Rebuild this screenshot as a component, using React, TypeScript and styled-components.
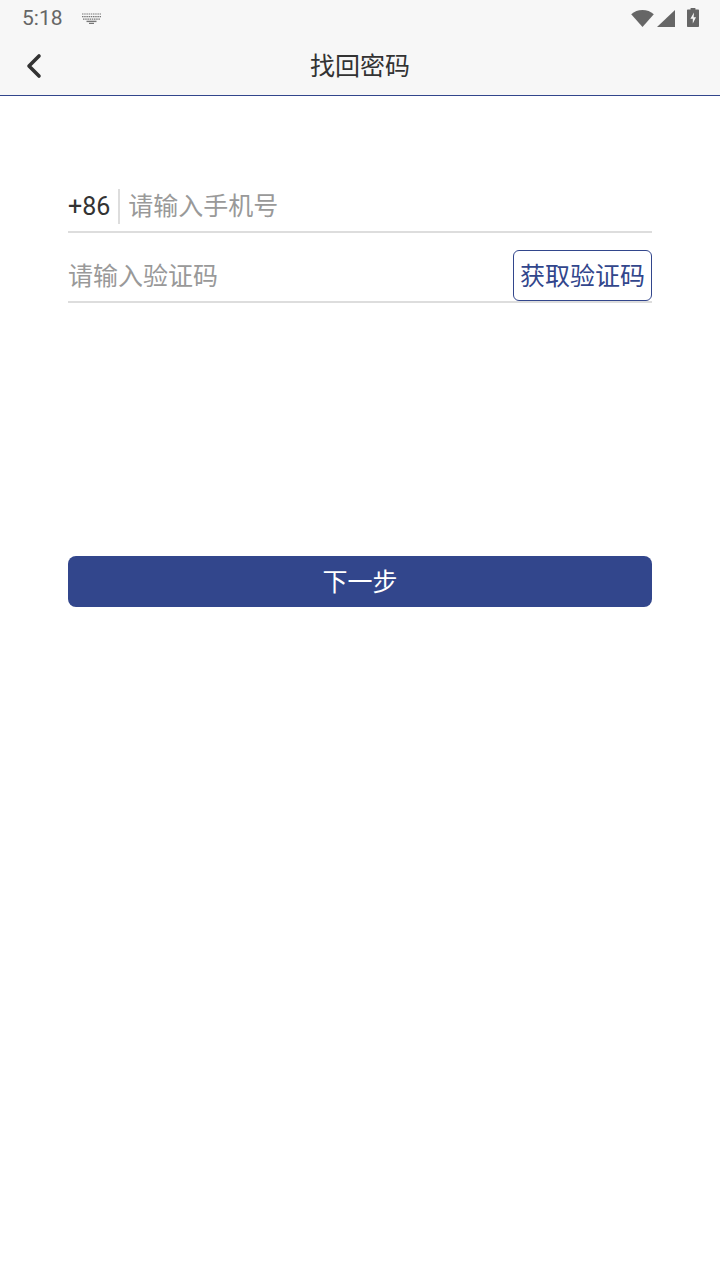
import React from 'react';
import styled, {createGlobalStyle} from 'styled-components';

const GlobalStyle = createGlobalStyle`
  html, body {
    margin: 0;
    padding: 0;
    background: #fff;
  }

  body {
    font-family: "Roboto", "Noto Sans CJK SC", sans-serif;
  }
`;

export default function App() {
    return (
        <Page>
            <GlobalStyle/>
            <Header>
                <StatusBar>
                    <StatusLeft>
                        <Time>5:18</Time>
                        <svg width="19" height="11" viewBox="0 0 19 11">
                            <g fill="none" stroke="#777" strokeWidth="1.2">
                                <path d="M0 1h19" strokeDasharray="1.5 .7"/>
                                <path d="M0 3.6h19" strokeDasharray="1.5 .7"/>
                                <path d="M1 6.2h17" strokeDasharray="1.5 .7"/>
                                <path d="M4.5 8.4h10" strokeWidth="1.4"/>
                                <path d="M7 10.4h5"/>
                            </g>
                        </svg>
                    </StatusLeft>
                    <StatusIcons>
                        <svg width="23" height="17" viewBox="0 0 23 17">
                            <path d="M0.2 4.2C3.2 1.6 7.2 0 11.5 0s8.3 1.6 11.3 4.2L11.5 17z" fill="#666"/>
                        </svg>
                        <svg width="18" height="17" viewBox="0 0 18 17">
                            <path d="M0 17L18 0v17z" fill="#666"/>
                        </svg>
                        <BatteryIcon width="12" height="19" viewBox="0 0 12 19">
                            <path fillRule="evenodd" d="M3.6 0h4.8v1.6h2.6c.6 0 1 .4 1 1V18c0 .6-.4 1-1 1H1c-.6 0-1-.4-1-1V2.6c0-.6.4-1 1-1h2.6zM7 4.6L3.4 10.8h2.4V15.6l3.2-6.4H6.6z" fill="#666"/>
                        </BatteryIcon>
                    </StatusIcons>
                </StatusBar>
                <NavBar>
                    <BackButton>
                        <svg width="18" height="28" viewBox="0 0 18 28">
                            <path d="M14 4L4 14l10 10" fill="none" stroke="#333" strokeWidth="3.6" strokeLinecap="round" strokeLinejoin="round"/>
                        </svg>
                    </BackButton>
                    <Title>找回密码</Title>
                </NavBar>
            </Header>
            <Form>
                <Row>
                    <Prefix>+86</Prefix>
                    <PrefixDivider/>
                    <Placeholder>请输入手机号</Placeholder>
                </Row>
                <Row>
                    <Placeholder>请输入验证码</Placeholder>
                    <CodeButton>获取验证码</CodeButton>
                </Row>
                <NextButton>下一步</NextButton>
            </Form>
        </Page>
    );
}

const Page = styled.div`
  width: 720px;
  height: 1280px;
  background: #fff;
  overflow: hidden;
`;

const Header = styled.header`
  background: #f7f7f7;
  border-bottom: 1px solid #32468c;
`;

const StatusBar = styled.div`
  height: 36px;
  padding: 0 21px 0 22px;
  display: flex;
  align-items: center;
  justify-content: space-between;
  color: #666;
`;

const StatusLeft = styled.div`
  display: flex;
  align-items: center;
  gap: 19px;
`;

const Time = styled.span`
  font-size: 21px;
`;

const StatusIcons = styled.div`
  display: flex;
  align-items: center;
  gap: 3px;
`;

const BatteryIcon = styled.svg`
  margin-left: 9px;
  margin-top: -2px;
`;

const NavBar = styled.div`
  position: relative;
  height: 59px;
  padding-bottom: 4px;
  box-sizing: border-box;
  display: flex;
  align-items: center;
  justify-content: center;
`;

const BackButton = styled.button`
  position: absolute;
  left: 25px;
  top: 16px;
  padding: 0;
  border: none;
  background: none;
  display: flex;
`;

const Title = styled.h1`
  margin: 0;
  font-size: 25px;
  font-weight: 400;
  color: #333;
`;

const Form = styled.main`
  margin: 0 68px;
  padding-top: 67px;
`;

const Row = styled.div`
  height: 70px;
  padding-top: 18px;
  box-sizing: border-box;
  display: flex;
  align-items: center;
  border-bottom: 2px solid #ddd;
`;

const Prefix = styled.span`
  font-size: 25px;
  color: #333;
`;

const PrefixDivider = styled.span`
  width: 2px;
  height: 35px;
  margin: 0 8px;
  background: #ddd;
`;

const Placeholder = styled.span`
  flex: 1;
  padding-bottom: 4px;
  font-size: 25px;
  color: #999;
`;

const CodeButton = styled.button`
  flex: none;
  width: 139px;
  height: 51px;
  padding: 0 0 4px;
  border: 1px solid #32468c;
  border-radius: 6px;
  background: #fff;
  color: #32468c;
  font-family: inherit;
  font-size: 25px;
  align-self: flex-end;
`;

const NextButton = styled.button`
  display: block;
  width: 100%;
  height: 51px;
  margin-top: 253px;
  padding: 0 0 4px;
  border: none;
  border-radius: 8px;
  background: #32468c;
  color: #fff;
  font-family: inherit;
  font-size: 25px;
`;
